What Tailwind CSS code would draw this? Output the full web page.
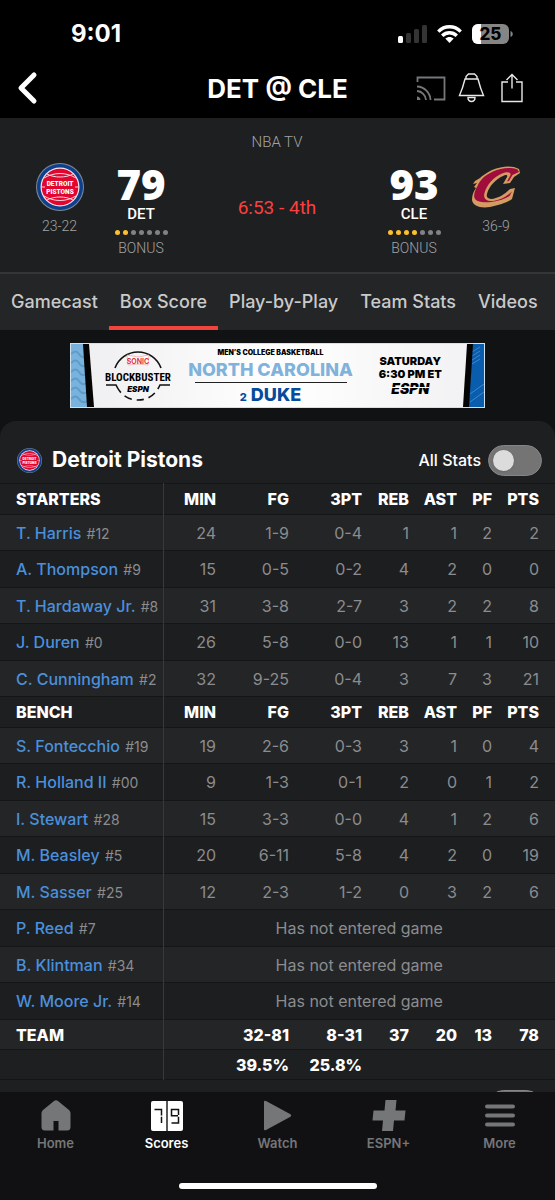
<!DOCTYPE html>
<html lang="en">
<head>
<meta charset="utf-8">
<meta name="viewport" content="width=device-width, initial-scale=1">
<title>DET @ CLE</title>
<script src="https://cdn.jsdelivr.net/npm/@tailwindcss/browser@4"></script>
</head>
<body class="flex h-screen flex-col overflow-hidden bg-[#111214] font-['Inter',sans-serif] text-white">

<svg class="hidden" aria-hidden="true">
  <symbol id="pistons" viewBox="0 0 48 48">
    <circle cx="24" cy="24" r="24" fill="#7f8a99"/>
    <circle cx="24" cy="24" r="23" fill="#0c3f8c"/>
    <circle cx="24" cy="24" r="19.5" fill="#f4e6ea"/>
    <circle cx="24" cy="24" r="18.3" fill="#e0062f"/>
    <g fill="none" stroke="#f6d5dc" stroke-width="1">
      <path d="M11 11C18 15 30 15 37 11M11 37C18 33 30 33 37 37M8 15C18 9 30 9 40 15M8 33C18 39 30 39 40 33M5 24H9M39 24H43"/>
    </g>
    <g fill="#fff" font-family="Roboto, sans-serif" font-weight="900" font-size="6.5" text-anchor="middle">
      <text x="24" y="23">DETROIT</text>
      <text x="24" y="30.500">PISTONS</text>
    </g>
  </symbol>
</svg>

<header class="shrink-0 bg-black">
  <div class="flex h-16 items-center justify-between pr-[42px] pl-[71px] pt-1">
    <span class="text-2xl font-bold">9:01</span>
    <div class="flex items-center gap-[10px]">
      <svg width="29" height="18" viewBox="0 0 29 18" role="img" aria-label="Signal">
        <rect x="0" y="11" width="5" height="7" rx="1.5" fill="#fff"/>
        <g fill="#343434"><rect x="8" y="8" width="5" height="10" rx="1.5"/><rect x="16" y="4" width="5" height="14" rx="1.5"/><rect x="24" y="0" width="5" height="18" rx="1.5"/></g>
      </svg>
      <svg width="25" height="18" viewBox="0 0 25 18" role="img" aria-label="Wi-Fi">
        <g fill="none" stroke="#fff" stroke-width="3.4"><path d="M1.3 6.6C7.5.2 17.5.2 23.7 6.6"/><path d="M5.2 10.7C9.3 6.7 15.7 6.7 19.8 10.7"/></g>
        <path d="M8.3 13.6C10.7 11.4 14.3 11.4 16.7 13.6L12.5 18Z" fill="#fff"/>
      </svg>
      <svg width="41" height="20" viewBox="0 0 41 20" role="img" aria-label="Battery 25 percent">
        <rect x="0" y="0" width="37" height="20" rx="6" fill="#858585"/>
        <path d="M6 0H9V20H6A6 6 0 0 1 0 14V6A6 6 0 0 1 6 0Z" fill="#fff"/>
        <path d="M38.5 7C41.5 8 41.5 12 38.5 13Z" fill="#858585"/>
        <text x="18.500" y="16" font-family="Inter, sans-serif" font-weight="800" font-size="17" text-anchor="middle" fill="#000">25</text>
      </svg>
    </div>
  </div>
  <div class="grid h-[54px] grid-cols-[1fr_auto_1fr] items-center px-4 pb-[6px]">
    <button aria-label="Back" class="w-6">
      <svg width="22" height="34" viewBox="0 0 22 34"><path d="M18 4L5 17L18 30" fill="none" stroke="#fff" stroke-width="5" stroke-linecap="round" stroke-linejoin="round"/></svg>
    </button>
    <h1 class="text-[26px] font-bold">DET @ CLE</h1>
    <div class="flex items-center justify-end gap-3 pr-4">
      <button aria-label="Cast">
        <svg width="30" height="25" viewBox="0 0 30 25" fill="none" stroke="#757779" stroke-width="1.8"><path d="M1.500 6V1.500H28.500V23.500H18"/><path d="M1 10.500A14 14 0 0 1 14.500 24"/><path d="M1 15A9.500 9.500 0 0 1 10 24"/><path d="M1 20.500A4 4 0 0 1 4.500 24H1Z" fill="#757779" stroke="none"/></svg>
      </button>
      <button aria-label="Alerts">
        <svg width="27" height="30" viewBox="0 0 27 30" fill="none" stroke="#e8e8e8" stroke-width="1.400"><path d="M8 6V3.500L10.500 1H16.500L19 3.500V6M7 6H20C21.500 12 23 17 25.500 22.500H1.500C4 17 5.500 12 7 6Z"/><path d="M10 24.500H17C17.500 29.800 9.500 29.800 10 24.500Z"/></svg>
      </button>
      <button aria-label="Share" class="pl-1">
        <svg width="22" height="30" viewBox="0 0 22 30" fill="none" stroke="#e8e8e8" stroke-width="1.400"><path d="M7 9H1V28.500H21V9H15M11 15.500V1.500M5.500 7L11 1.500L16.500 7"/></svg>
      </button>
    </div>
  </div>
</header>

<section class="grid h-[154px] shrink-0 grid-cols-[119px_44px_1fr_46px_118px] bg-[#1e1f21] font-['Roboto',sans-serif] text-sm font-light text-[#a2a3a5]">
  <div class="flex flex-col items-center gap-[5px] pt-[45px]">
    <svg width="48" height="48"><use href="#pistons"/></svg>
    <span>23-22</span>
  </div>
  <div class="flex flex-col items-center pt-[46px]">
    <strong class="font-['Open_Sans',sans-serif] text-[42px] leading-10 font-extrabold text-white">79</strong>
    <span class="text-[15px] leading-5 font-medium text-white">DET</span>
    <div class="mt-1 mb-px flex gap-[3px] py-[2px]" id="fouls-det"></div>
    <span>BONUS</span>
  </div>
  <div class="flex flex-col items-center pt-3 text-[15px] leading-6">
    <span>NBA TV</span>
    <span class="pt-10 text-[19px] leading-7 font-normal text-[#fb3f3f]">6:53 - 4th</span>
  </div>
  <div class="flex flex-col items-center pt-[46px]">
    <strong class="font-['Open_Sans',sans-serif] text-[42px] leading-10 font-extrabold text-white">93</strong>
    <span class="text-[15px] leading-5 font-medium text-white">CLE</span>
    <div class="mt-1 mb-px flex gap-[3px] py-[2px]" id="fouls-cle"></div>
    <span>BONUS</span>
  </div>
  <div class="flex flex-col items-center gap-[5px] pt-[45px]">
    <svg width="48" height="48" viewBox="0 -3 48 48" role="img" aria-label="Cavaliers">
      <path d="M48 7L47 3C40-1 30 0 20 4C14 7 10 10 8 12L3 15L1 18L5 17L2 21L4 22C1 26 0 30 0 34C1 40 8 42.500 18 41C28 39 36 36 40 33L43 22L38 23C32 29 26 32 20 33C16 33 14 31 15 28C17 20 24 13 31 10C34 8 36 9 35 11L31 18L38 17L42 11Z" fill="#d39c63"/>
      <path d="M47 6L45.500 3.500C38 1 29 2 21 5.500C13 9 8 14 5.500 20C3 24 1.500 29 2.500 32C4 36 12 37 19 36C27 35 33 33 37.500 30L40 25.500C34 31 28 34 21 35C14 35.500 11 32 12.500 27C15 18 22 11 30 7.500C35 5.500 39 6 38.500 9L35 15.500L37 15L40.500 9Z" fill="#a00c3c"/>
    </svg>
    <span>36-9</span>
  </div>
</section>

<nav class="flex shrink-0 overflow-hidden border-t-2 border-[#343537] bg-[#242527] text-lg font-medium whitespace-nowrap text-[#c9cacb]">
  <a href="#gamecast" class="flex h-14 items-center border-b-4 border-transparent px-[11px] pt-1">Gamecast</a>
  <a href="#box" class="flex h-14 items-center border-b-4 border-[#f0443c] px-[11px] pt-1" aria-current="page">Box Score</a>
  <a href="#plays" class="flex h-14 items-center border-b-4 border-transparent px-[11px] pt-1">Play-by-Play</a>
  <a href="#stats" class="flex h-14 items-center border-b-4 border-transparent px-[11px] pt-1">Team Stats</a>
  <a href="#videos" class="flex h-14 items-center border-b-4 border-transparent px-[11px] pt-1">Videos</a>
</nav>

<main class="min-h-0 flex-1 overflow-hidden pt-[13px]">
  <a href="#promo" class="mx-auto flex h-[65px] w-[415px] justify-between overflow-hidden border border-[#cfe0ee] bg-linear-to-r from-[#eeeef0] via-white to-[#f1f1f3] text-black">
    <svg class="shrink-0" width="24" height="63" viewBox="0 0 24 63">
      <path d="M0 0H13L18 63H0Z" fill="#79b2dc"/>
      <g fill="none" stroke="#5f9cca" stroke-width="2"><path d="M0 10Q5 5 8 10T15 12M0 19Q5 14 8 19T15 21M0 28Q5 23 8 28T15 30M0 37Q5 32 8 37T16 39M0 46Q5 41 8 46T16 48M0 55Q5 50 8 55T17 57"/></g>
      <path d="M12 0H18L23 63H16Z" fill="#050505"/>
    </svg>
    <svg class="shrink-0" width="66" height="63" viewBox="3 0 66 63" font-family="Inter, sans-serif" text-anchor="middle">
      <path d="M13 24A24.500 24.500 0 0 1 59 24" fill="none" stroke="#111" stroke-width="1.600"/>
      <path d="M4 41H14Q21 56 36 56T58 41H68" fill="none" stroke="#111" stroke-width="1.600" stroke-dasharray="19 5 8 5 7 5 8 5 30"/>
      <path d="M25 11L36 13L47 11L46 21L36 20L26 21Z" fill="#fff" stroke="#f0a0a0" stroke-width=".7"/>
      <text x="36" y="19.500" font-size="7" font-weight="700" fill="#e1343f">SONIC</text>
      <text x="36" y="37" font-family="'Liberation Sans Narrow', 'Roboto Condensed', 'Liberation Sans'" font-size="11" font-weight="700">BLOCKBUSTER</text>
      <text x="36" y="48" font-size="8" font-weight="900" font-style="italic">ESPN</text>
    </svg>
    <div class="flex w-[180px] flex-col items-center pt-1 font-black whitespace-nowrap">
      <span class="text-[7px] leading-[10px]">MEN’S COLLEGE BASKETBALL</span>
      <span class="text-lg leading-6 font-extrabold text-[#7fb3dc]">NORTH CAROLINA</span>
      <span class="h-px w-[152px] shrink-0 bg-[#222]"></span>
      <span class="text-lg leading-6 font-extrabold text-[#064b9c]"><span class="text-[11px]">2</span> DUKE</span>
    </div>
    <div class="flex w-20 flex-col items-center pt-[11px] text-[11px] leading-[13px] font-black">
      <span>SATURDAY</span>
      <span>6:30 PM ET</span>
      <span class="relative text-sm leading-4 italic">ESPN<i class="absolute inset-x-0 top-[6px] h-px bg-white"></i></span>
    </div>
    <svg class="shrink-0" width="24" height="63" viewBox="0 0 24 63">
      <path d="M10 0H24V63H8Z" fill="#0a5cad"/>
      <path d="M12 8L20 3M12 12L20 7M12 16L20 11M12 20L20 15M10 50L24 40M10 58L24 48" stroke="#3f86c9" stroke-width="1"/>
      <path d="M7 0H13L9 63H3Z" fill="#050505"/>
    </svg>
  </a>

  <section class="mt-[13px] rounded-t-2xl bg-[#1e1f21] pt-4">
    <div class="flex h-[46px] items-center pr-[13px] pl-[17px]">
      <svg width="25" height="25"><use href="#pistons"/></svg>
      <h2 class="pl-[10px] text-[21px] font-bold">Detroit Pistons</h2>
      <label class="ml-auto flex items-center gap-[7px] text-base font-medium">All Stats
        <input type="checkbox" class="h-[31px] w-[54px] appearance-none rounded-full border border-[#858585] bg-[#747474] pt-1 pl-1 before:block before:size-[21px] before:rounded-full before:bg-[#dcdcdd] before:shadow">
      </label>
    </div>
    <table class="w-full table-fixed border-collapse text-right text-base">
      <colgroup>
        <col><col class="w-[53px]"><col class="w-[73px]"><col class="w-[73px]"><col class="w-[47px]"><col class="w-[48px]"><col class="w-[35px]"><col class="w-[63px]">
      </colgroup>
      <tbody id="box-rows"></tbody>
    </table>
    <div class="flex h-12 items-start justify-end pt-[10px] pr-[13px]">
      <input type="checkbox" aria-label="All Stats, Cleveland" class="h-[31px] w-[54px] appearance-none rounded-full border border-[#858585] bg-[#747474]">
    </div>
  </section>
</main>

<nav class="shrink-0 bg-[#111113] text-[13px] font-semibold text-[#757678]">
  <div class="grid h-[91px] grid-cols-5 pt-2">
    <a href="#home" class="flex flex-col items-center gap-[3px]">
      <svg width="30" height="31" viewBox="0 0 30 31"><path d="M13 1Q15-.5 17 1L28 10Q29.500 11.500 29.500 13V27Q29.500 30.500 26 30.500H17.500V21H12.500V30.500H4Q.5 30.500 .5 27V13Q.5 11.500 2 10Z" fill="#757678"/></svg>
      <span>Home</span>
    </a>
    <a href="#scores" class="flex flex-col items-center gap-[3px] text-white" aria-current="page">
      <svg width="32" height="31" viewBox="0 0 32 31"><rect x="0" y="1" width="32" height="30" rx="2" fill="#fff"/><path d="M16 1V31" stroke="#111" stroke-width="1.400"/><g fill="none" stroke="#111" stroke-width="1.500"><path d="M3.500 9.500H10.500V15.500M10.500 16.800V23"/><path d="M27.500 15V9.500H20.500V15.800H27M27.500 16.800V23H20.500"/></g></svg>
      <span>Scores</span>
    </a>
    <a href="#watch" class="flex flex-col items-center gap-[3px]">
      <svg width="30" height="31" viewBox="0 0 30 31"><path d="M1 2Q1 0 3 1L27 14Q29.500 15.500 27 17L3 30Q1 31 1 29Z" fill="#757678"/></svg>
      <span>Watch</span>
    </a>
    <a href="#plus" class="flex flex-col items-center gap-[3px]">
      <svg width="34" height="31" viewBox="0 0 34 31"><path d="M13.500 0H24.500L23.500 10.500H33.500L32.500 20.500H22L21 31H10L11 20.500H.5L1.500 10.500H12.500Z" fill="#757678"/></svg>
      <span>ESPN+</span>
    </a>
    <a href="#more" class="flex flex-col items-center gap-[3px]">
      <svg width="30" height="31" viewBox="0 0 30 31" stroke="#757678" stroke-width="4" stroke-linecap="round"><path d="M2 6.500H28M2 15.500H28M2 24.500H28"/></svg>
      <span>More</span>
    </a>
  </div>
  <div class="mx-auto mb-[11px] h-[6px] w-[198px] rounded-full bg-white"></div>
</nav>

<script>
  const dots = (id, on) => {
    document.getElementById(id).innerHTML = Array.from({length: 7}, (_, i) =>
      i < on ? '<i class="size-[5px] rounded-full bg-[#fcc02e]"></i>'
             : '<i class="size-[5px] rounded-full bg-[#808284]"></i>').join('');
  };
  dots('fouls-det', 2);
  dots('fouls-cle', 4);

  const head = name => `<tr class="h-[31px] border-y border-[#141517] bg-[#1e1f21]">
    <th scope="col" class="border-r border-r-[#38393b] pl-4 text-left font-extrabold">${name}</th>
    ${['MIN', 'FG', '3PT', 'REB', 'AST', 'PF'].map(h => `<th scope="col" class="font-extrabold">${h}</th>`).join('')}
    <th scope="col" class="pr-4 font-extrabold">PTS</th></tr>`;

  const row = (r, i) => {
    const [name, num, ...stats] = r;
    const tone = i % 2 ? 'h-[37px] bg-[#1d1e20]' : 'h-[36px] bg-[#242527]';
    const cells = stats.length
      ? stats.map((s, k) => k === 6 ? `<td class="pr-4">${s}</td>` : `<td>${s}</td>`).join('')
      : '<td colspan="7" class="text-center">Has not entered game</td>';
    return `<tr class="${tone} border-y border-[#141517] text-[#8b8c8e]">
      <th scope="row" class="border-r border-r-[#38393b] pl-4 text-left font-medium whitespace-nowrap"><a href="#player" class="text-[#4a90dc]">${name}</a> <span class="pl-px text-sm font-normal">#${num}</span></th>${cells}</tr>`;
  };

  const starters = [
    ['T. Harris', 12, 24, '1-9', '0-4', 1, 1, 2, 2],
    ['A. Thompson', 9, 15, '0-5', '0-2', 4, 2, 0, 0],
    ['T. Hardaway Jr.', 8, 31, '3-8', '2-7', 3, 2, 2, 8],
    ['J. Duren', 0, 26, '5-8', '0-0', 13, 1, 1, 10],
    ['C. Cunningham', 2, 32, '9-25', '0-4', 3, 7, 3, 21]
  ];
  const bench = [
    ['S. Fontecchio', 19, 19, '2-6', '0-3', 3, 1, 0, 4],
    ['R. Holland II', '00', 9, '1-3', '0-1', 2, 0, 1, 2],
    ['I. Stewart', 28, 15, '3-3', '0-0', 4, 1, 2, 6],
    ['M. Beasley', 5, 20, '6-11', '5-8', 4, 2, 0, 19],
    ['M. Sasser', 25, 12, '2-3', '1-2', 0, 3, 2, 6],
    ['P. Reed', 7],
    ['B. Klintman', 34],
    ['W. Moore Jr.', 14]
  ];
  document.getElementById('box-rows').innerHTML =
    head('STARTERS') + starters.map(row).join('') +
    head('BENCH') + bench.map(row).join('') +
    `<tr class="h-[30px] border-y border-[#141517] bg-[#242527] font-extrabold">
      <th scope="row" class="border-r border-r-[#38393b] pl-4 text-left font-extrabold">TEAM</th>
      <td></td><td>32-81</td><td>8-31</td><td>37</td><td>20</td><td>13</td><td class="pr-4">78</td></tr>
    <tr class="h-[30px] border-y border-[#141517] bg-[#1e1f21] font-extrabold">
      <td class="border-r border-r-[#38393b]"></td>
      <td></td><td>39.5%</td><td>25.8%</td><td></td><td></td><td></td><td></td></tr>`;
</script>
</body>
</html>
